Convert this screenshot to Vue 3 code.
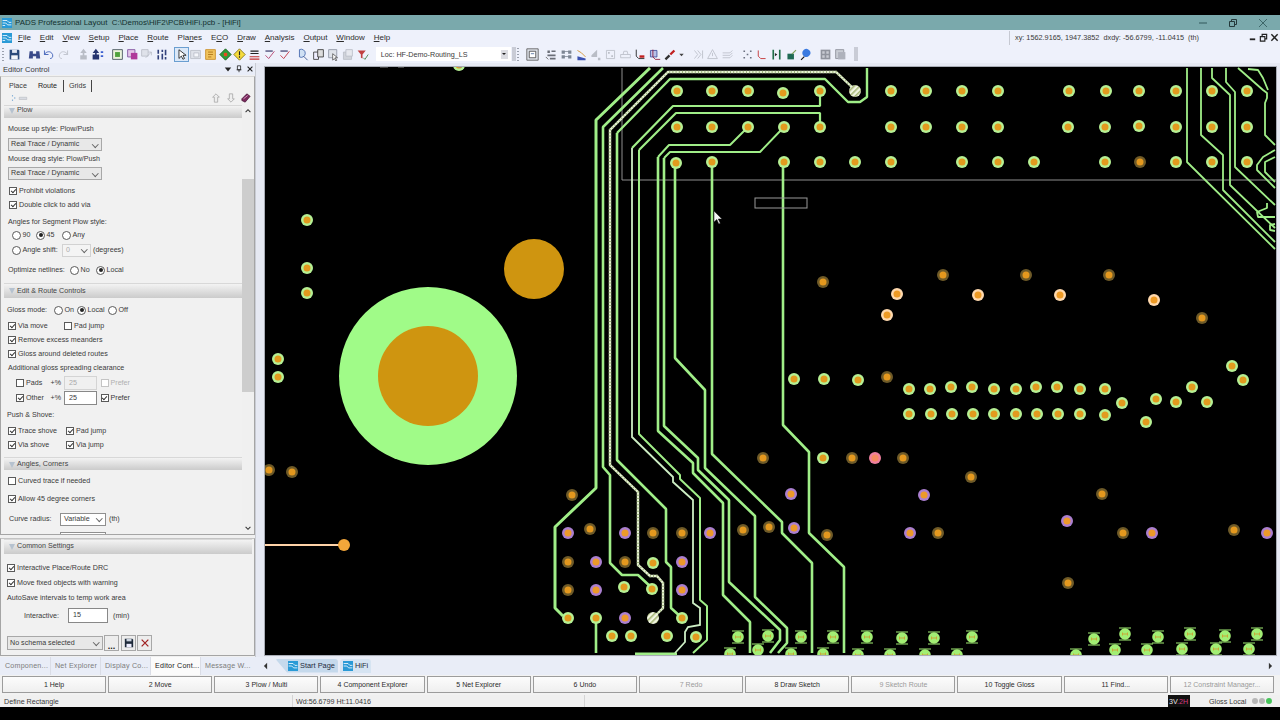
<template>
  <div class="app">
    <div class="letterbox"></div>

    <div class="titlebar">
      <svg class="app-logo" viewBox="0 0 16 16"><rect width="16" height="16" fill="#2a9ad6" /><path d="M1 4h7l3 3h4M1 8h5l3 3h6M1 12h4" stroke="#e8f6ff" stroke-width="1.4" fill="none" /></svg>
      <span class="title-text">PADS Professional Layout&nbsp; C:\Demos\HiF2\PCB\HiFi.pcb - [HiFi]</span>
      <div class="win-controls">
        <svg viewBox="0 0 10 10"><path d="M1 5h8" stroke="#3d6668" stroke-width="1.2" /></svg>
        <svg viewBox="0 0 10 10"><path d="M1.5 3.5h5v5h-5zM3.5 3.5v-2h5v5h-2" stroke="#24393b" fill="none" /></svg>
        <svg viewBox="0 0 10 10"><path d="M1 1l8 8M9 1l-8 8" stroke="#3d6668" stroke-width="1" /></svg>
      </div>
    </div>

    <div class="menubar">
      <svg class="app-logo menu-logo" viewBox="0 0 16 16"><rect width="16" height="16" fill="#2a9ad6" /><path d="M1 4h7l3 3h4M1 8h5l3 3h6M1 12h4" stroke="#e8f6ff" stroke-width="1.4" fill="none" /></svg>
      <nav class="menu-items">
        <span v-for="m in menus" :key="m[0] + m[1]" class="menu-item">{{ m[0] }}<u>{{ m[1] }}</u>{{ m[2] }}</span>
      </nav>
      <div class="coords">xy: 1562.9165, 1947.3852&nbsp; dxdy: -56.6799, -11.0415&nbsp; (th)</div>
      <div class="mdi-controls">
        <svg viewBox="0 0 10 10"><path d="M2 7h6" stroke="#222" stroke-width="2" /></svg>
        <svg viewBox="0 0 10 10"><path d="M1.5 4h5v5h-5zM3.5 4V1.500h5v5H6.500" stroke="#222" fill="none" stroke-width="1.300" /></svg>
        <svg viewBox="0 0 10 10"><path d="M1.500 1.500l7 7M8.500 1.500l-7 7" stroke="#222" stroke-width="1.600" /></svg>
      </div>
    </div>

    <div class="toolbar">
      <span class="grip"></span>
      <div v-for="(group, gi) in leftTools" :key="gi" class="tb-group">
        <span v-for="(ic, i) in group" :key="i" class="tb-slot" :class="{ 'tb-slot--on': ic.on }">
          <svg viewBox="0 0 16 16"><path v-for="(s, k) in ic.parts" :key="k" :d="s.d" :fill="s.f" :stroke="s.s" /></svg>
        </span>
      </div>
      <div class="combo">
        <span>Loc: HF-Demo-Routing_LS</span>
        <i class="combo-arrow"></i>
      </div>
      <span class="tb-end"></span>
      <span class="grip grip--right"></span>
      <div v-for="(group, gi) in rightTools" :key="'r' + gi" class="tb-group">
        <span v-for="(ic, i) in group" :key="i" class="tb-slot" :class="{ 'tb-slot--dd': ic.dd }">
          <svg viewBox="0 0 16 16"><path v-for="(s, k) in ic.parts" :key="k" :d="s.d" :fill="s.f" :stroke="s.s" /></svg>
        </span>
      </div>
      <span class="tb-end"></span>
    </div>

    <div class="main">
      <aside class="editor">
        <div class="editor-title">
          <span>Editor Control</span>
          <div class="editor-title-icons">
            <svg viewBox="0 0 10 10"><path d="M1 3h8L5 8z" fill="#222" /></svg>
            <svg viewBox="0 0 10 10"><path d="M3 1h4v5H3zM2 6h6M5 6v3" stroke="#222" fill="none" /></svg>
            <svg viewBox="0 0 10 10"><path d="M2 2l6 6M8 2l-6 6" stroke="#222" stroke-width="1.400" /></svg>
          </div>
        </div>

        <div class="editor-box">
          <div class="tabs">
            <span class="tab">Place</span>
            <span class="tab tab--active">Route</span>
            <span class="tab tab--line">Grids</span>
          </div>
          <div class="mini-tools">
            <svg class="mini-left" viewBox="0 0 24 10"><path d="M2 1v2M5 4v2M2 7v2" stroke="#8ab4d8" stroke-width="1.500" /><path d="M11 4h10v3H11z" fill="#d8dbe2" stroke="#a8acb4" stroke-width=".6" /></svg>
            <div class="mini-right">
              <svg viewBox="0 0 12 12"><path d="M6 1l4 4H8v6H4V5H2z" fill="#eee" stroke="#aaa" /></svg>
              <svg viewBox="0 0 12 12"><path d="M6 11l4-4H8V1H4v6H2z" fill="#eee" stroke="#aaa" /></svg>
              <svg viewBox="0 0 12 12"><path d="M1 7l6-6 4 3-6 7-4-2z" fill="#7b2a5e" stroke="#3f1230" stroke-width=".8" /><path d="M3 7l5-4" stroke="#e6a8d0" /></svg>
            </div>
          </div>

          <div class="scroll-area">
            <div class="scroll-body">
              <div class="section-head section-head--first">Plow</div>
              <div class="row lbl mt4">Mouse up style: Plow/Push</div>
              <div class="select sel-plow mt2">Real Trace / Dynamic<i class="chev"></i></div>
              <div class="row lbl mt1">Mouse drag style: Plow/Push</div>
              <div class="select sel-plow mt1">Real Trace / Dynamic<i class="chev"></i></div>
              <label class="row cbrow in1 mt4"><i class="cb on"></i>Prohibit violations</label>
              <label class="row cbrow in1"><i class="cb on"></i>Double click to add via</label>
              <div class="row lbl mt3 h13">Angles for Segment Plow style:</div>
              <div class="row in2">
                <i class="rb"></i><span class="w13">90</span>
                <i class="rb on"></i><span class="w15">45</span>
                <i class="rb"></i><span>Any</span>
              </div>
              <div class="row in2 h16">
                <i class="rb"></i><span class="w39">Angle shift:</span>
                <span class="select sel-angle">0<i class="chev"></i></span>
                <span>(degrees)</span>
              </div>
              <div class="row lbl mt4 h16">
                <span class="w62">Optimize netlines:</span>
                <i class="rb"></i><span class="w15">No</span>
                <i class="rb on"></i><span>Local</span>
              </div>
              <div class="section-head h15 mt5">Edit &amp; Route Controls</div>
              <div class="row h16 mt4 in3">
                <span class="w47">Gloss mode:</span>
                <i class="rb"></i><span class="w12">On</span>
                <i class="rb on"></i><span class="w20">Local</span>
                <i class="rb"></i><span>Off</span>
              </div>
              <div class="row cbrow in4 mt1">
                <i class="cb on"></i><span class="w46">Via move</span>
                <i class="cb"></i><span>Pad jump</span>
              </div>
              <label class="row cbrow in4"><i class="cb on"></i>Remove excess meanders</label>
              <label class="row cbrow in4"><i class="cb on"></i>Gloss around deleted routes</label>
              <div class="row lbl">Additional gloss spreading clearance</div>
              <div class="row cbrow in5 mt1">
                <i class="cb"></i><span class="w24">Pads</span><span class="w14">+%</span>
                <span class="num num--off">25</span>
                <i class="cb cb--off"></i><span class="dim">Prefer</span>
              </div>
              <div class="row cbrow in5 h16">
                <i class="cb on"></i><span class="w24">Other</span><span class="w14">+%</span>
                <span class="num">25</span>
                <i class="cb on"></i><span>Prefer</span>
              </div>
              <div class="row mt2 in3">Push &amp; Shove:</div>
              <div class="row cbrow in4 mt2">
                <i class="cb on"></i><span class="w48">Trace shove</span>
                <i class="cb on"></i><span>Pad jump</span>
              </div>
              <div class="row cbrow in4">
                <i class="cb on"></i><span class="w48">Via shove</span>
                <i class="cb on"></i><span>Via jump</span>
              </div>
              <div class="section-head mt5">Angles, Corners</div>
              <label class="row cbrow in4 mt4"><i class="cb"></i>Curved trace if needed</label>
              <label class="row cbrow in4 mt4"><i class="cb on"></i>Allow 45 degree corners</label>
              <div class="row mt6 in6">
                <span class="w51">Curve radius:</span>
                <span class="select sel-curve">Variable<i class="chev"></i></span>
                <span>(th)</span>
              </div>
              <div class="select sel-curve sel-clip"></div>
            </div>
            <div class="scrollbar">
              <svg class="arrow" viewBox="0 0 10 6"><path d="M2 5l3-3 3 3" stroke="#333" fill="none" stroke-width="1.300" /></svg>
              <div class="thumb"></div>
              <svg class="arrow arrow--down" viewBox="0 0 10 6"><path d="M2 1l3 3 3-3" stroke="#333" fill="none" stroke-width="1.300" /></svg>
            </div>
          </div>
        </div>

        <div class="common-box">
          <div class="section-head common-head">Common Settings</div>
          <label class="row cbrow in7 mt7"><i class="cb on"></i>Interactive Place/Route DRC</label>
          <label class="row cbrow in7 mt1"><i class="cb on"></i>Move fixed objects with warning</label>
          <div class="row in8 mt1">AutoSave intervals to temp work area</div>
          <div class="row interactive">
            <span class="w44">Interactive:</span>
            <span class="num num--wide">15</span>
            <span>(min)</span>
          </div>
          <div class="schema-row">
            <div class="select sel-schema">No schema selected<i class="chev"></i></div>
            <span class="sq-btn sq-btn--dots">...</span>
            <span class="sq-btn">
              <svg viewBox="0 0 12 12"><path d="M1 1h9l1 1v9H1z" fill="#1e2a3a" /><path d="M3 1h6v3H3z" fill="#cdd5e0" /><path d="M3 7h6v4H3z" fill="#eef" /></svg>
            </span>
            <span class="sq-btn">
              <svg viewBox="0 0 12 12"><path d="M2 2l8 8M10 2l-8 8" stroke="#a02020" stroke-width="1.500" /></svg>
            </span>
          </div>
        </div>
      </aside>

      <div class="canvas-wrap">
        <svg class="board" viewBox="265 67 1011 588" preserveAspectRatio="none">
          <defs>
            <pattern id="hatch" width="4" height="4" patternUnits="userSpaceOnUse" patternTransform="rotate(45)">
              <rect width="4" height="4" fill="#f2f6e2" />
              <rect width="1.600" height="4" fill="#a8b878" />
            </pattern>
          </defs>

          <circle cx="428" cy="376" r="89" fill="#a0fb88" />
          <circle cx="428" cy="376" r="50" fill="#cf9510" />
          <circle cx="534" cy="269" r="30" fill="#cf9510" />

          <path d="M265 545H343" stroke="#ffd3a8" stroke-width="2" fill="none" />
          <circle cx="344" cy="545" r="6" fill="#f2a63a" />

          <path d="M622 68V180H1276" stroke="#8e8e8e" fill="none" />

          <path v-for="(t, i) in traces" :key="'t' + i" :d="t[0]" :stroke-width="t[1]" stroke="#a0ee88" fill="none" stroke-linejoin="bevel" />
          <path v-for="(t, i) in paleTraces" :key="'p' + i" :d="t" stroke-width="1.800" stroke="#cdeec4" fill="none" />
          <template v-for="(t, i) in hatchTraces" :key="'h' + i">
            <path :d="t" stroke-width="2.400" stroke="#e6f2d2" fill="none" />
            <path :d="t" stroke-width="2.400" stroke="#9db37c" stroke-dasharray="1 2.200" fill="none" />
          </template>

          <rect x="755" y="198" width="52" height="10" fill="none" stroke="#9a9a9a" />

          <g v-for="group in padGroups" :key="group.name">
            <g v-for="(p, i) in group.pts" :key="i">
              <circle :cx="p[0]" :cy="p[1]" r="6" :fill="group.ring" />
              <circle :cx="p[0]" :cy="p[1]" r="3.500" :fill="group.core" />
            </g>
          </g>

          <circle v-for="(p, i) in hatchPads" :key="'hp' + i" :cx="p[0]" :cy="p[1]" r="6" fill="url(#hatch)" />

          <g v-for="(p, i) in smdPads" :key="'s' + i" :transform="`translate(${p[0]} ${p[1]})`">
            <circle r="5.800" fill="#a2ee74" />
            <path d="M-6-6.500H6V-5.500H-6zM-6 5.500H6V6.500H-6z" fill="#a2ee74" />
            <path d="M-2.500-1.500v3M2.500-1.500v3M-2.500 0h5" stroke="#c8a838" fill="none" />
          </g>

          <path d="M714 211v11l2.800-2.500 2 4.500 1.500-.7-2-4.300h3.700z" fill="#f4f4f4" stroke="#111" stroke-width=".5" />
          <path d="M380 67h8M398 67h6M458 67h4" stroke="#888" stroke-width="1" />
        </svg>
      </div>
    </div>

    <div class="tabrow">
      <div class="panel-tabs">
        <span v-for="t in panelTabs" :key="t" class="panel-tab" :class="{ 'panel-tab--on': t === 'Editor Cont...' }">{{ t }}</span>
      </div>
      <div class="doc-tabs">
        <svg class="nav-arrow" viewBox="0 0 6 10"><path d="M5 1L1 5l4 4z" fill="#333" /></svg>
        <span class="doc-tab doc-tab--start">
          <svg class="doc-ico" viewBox="0 0 16 16"><rect width="16" height="16" fill="#2a9ad6" /><path d="M1 4h7l3 3h4M1 8h5l3 3h6" stroke="#e8f6ff" stroke-width="1.400" fill="none" /></svg>
          Start Page
        </span>
        <span class="doc-tab doc-tab--hifi">
          <svg class="doc-ico" viewBox="0 0 16 16"><rect width="16" height="16" fill="#2a9ad6" /><path d="M1 4h7l3 3h4M1 8h5l3 3h6" stroke="#e8f6ff" stroke-width="1.400" fill="none" /></svg>
          HiFi
        </span>
        <svg class="nav-arrow nav-arrow--end" viewBox="0 0 6 10"><path d="M1 1l4 4-4 4z" fill="#333" /></svg>
      </div>
    </div>

    <div class="fkeys">
      <button v-for="k in fkeys" :key="k.label" class="fkey" :class="{ 'fkey--off': k.off }">{{ k.label }}</button>
    </div>

    <div class="statusbar">
      <span class="st-cell st-msg">Define Rectangle</span>
      <span class="st-cell st-size">Wd:56.6799 Ht:11.0416</span>
      <span class="st-cell st-blank"></span>
      <span class="st-layer">3V<b>.2H</b></span>
      <span class="st-gloss">Gloss Local</span>
      <span class="st-dot"></span><span class="st-dot"></span><span class="st-dot st-dot--on"></span>
    </div>
  </div>
</template>

<script setup>
const menus = [
  ['', 'F', 'ile'], ['', 'E', 'dit'], ['', 'V', 'iew'], ['', 'S', 'etup'], ['', 'P', 'lace'], ['', 'R', 'oute'],
  ['Pla', 'n', 'es'], ['E', 'C', 'O'], ['', 'D', 'raw'], ['', 'A', 'nalysis'], ['', 'O', 'utput'], ['', 'W', 'indow'], ['', 'H', 'elp']
]

const panelTabs = ['Componen...', 'Net Explorer', 'Display Co...', 'Editor Cont...', 'Message W...']

const fkeys = [
  { label: '1 Help' }, { label: '2 Move' }, { label: '3 Plow / Multi' }, { label: '4 Component Explorer' },
  { label: '5 Net Explorer' }, { label: '6 Undo' }, { label: '7 Redo', off: true }, { label: '8 Draw Sketch' },
  { label: '9 Sketch Route', off: true }, { label: '10 Toggle Gloss' }, { label: '11 Find...' },
  { label: '12 Constraint Manager...', off: true }
]

// f = fill, d = path, s = stroke
const p = (f, d, s = 'none') => ({ f, d, s })
const ico = (...parts) => ({ parts })
const grey = '#b9bdc6'

const leftTools = [
  [ico(p('#2b4a7a', 'M2 2h11l1 1v11H2z'), p('#dfe6f2', 'M5 2h6v4H5z'), p('#f4f6fa', 'M4 9h8v5H4z'))],
  [
    ico(p('#3a4a8a', 'M2 4h4v9H1zM10 4h4l1 9h-5zM6 7h4v3H6z')),
    ico(p('none', 'M3 3v5h5M3 8c2-4 8-5 10 0 1 3-1 5-3 5', '#2a4fb0')),
    ico(p('none', 'M13 3v5H8M13 8C11 4 5 3 3 8c-1 3 1 5 3 5', grey))
  ],
  [
    ico(p(grey, 'M8 1l4 5H9v3h3v5H4V9h3V6H4z')),
    ico(p('#25346f', 'M6 1l4 5H7v2h3v6H2V8h3V6H2z'), p('#3a5fd0', 'M12 4h3v2h-3zM12 9h3v2h-3z'))
  ],
  [
    ico(p('#eaf3dc', 'M2 2h12v12H2z', '#3a4a52'), p('#4fa23c', 'M5 5h6v6H5z')),
    ico(p('#e4c7e8', 'M2 2h9v9H2z', '#7a4a9a'), p('#b03a9a', 'M6 6h8v8H6z')),
    ico(p('#dfe2ea', 'M2 2h8v8H2z', grey), p('none', 'M7 12L14 5M10 5h4v4', grey)),
    ico(p('#31407a', 'M3 2h2v5H3zM3 9h2v5H3zM8 2h2v3H8zM8 7h2v7H8zM12 2h2v7h-2zM12 11h2v3h-2z'))
  ],
  [
    { on: true, parts: [p('#fff', 'M5 2v11l3-3 2 4 2-1-2-4h4z', '#111')] },
    ico(p('#dfe3ea', 'M2 3h12v10H2z', grey), p('#f5f7fb', 'M6 6h6v5H6z', grey)),
    ico(p('#f1c35c', 'M2 2h12v12H2z', '#c88a20'), p('#fff3cf', 'M5 5h6M5 8h6M5 11h4', '#a86e10')),
    ico(p('#2f9e38', 'M8 1l7 7-7 7-7-7z', '#1b5a20'), p('#e84a20', 'M6 6h4v4H6z')),
    ico(p('#f6dc3c', 'M8 1l7 7-7 7-7-7z', '#7a6a10'), p('#222', 'M7.300 4h1.400v5H7.300zM7.300 10h1.400v2H7.300z')),
    ico(p('#c03030', 'M2 10h12v1.500H2zM2 13h12v1.500H2z'), p('#222', 'M3 3h10v1.500H3zM3 6h10v1.500H3z')),
    ico(p('none', 'M3 9l4 4 7-9', '#b03060'), p('#3a3a6a', 'M3 3h9v1.500H3z')),
    ico(p('none', 'M3 9l4 4 7-9', '#c02030'), p('#3a3a6a', 'M3 3h9v1.500H3z'))
  ],
  [
    ico(p('#cfe0f4', 'M3 2a5 5 0 1 1 0 9z', '#3a5fa8'), p('none', 'M8 10l5 5', '#2a4a88')),
    ico(p('#eef', 'M2 5h6v9H2z', '#333'), p('#ddd', 'M7 2h7v9H7z', '#333')),
    ico(p('#dfe3ea', 'M2 2h10v10H2z', '#8a90a0'), p('#fff', 'M7 7v8l2-2 2 3 1-1-2-3h3z', '#555')),
    ico(p('#d0d3da', 'M3 5h10v9H3z', grey), p('#e6e8ee', 'M6 2h8v8H6z', grey)),
    ico(p('#c04040', 'M2 3h10L8 8v5l-2-1V8z'), p('none', 'M9 12l2 2 4-6', '#3a7a3a'))
  ]
]

const rightTools = [
  [ico(p('#dfe3ea', 'M1 1h14v14H1z', '#555'), p('#fff', 'M4 4h8v8H4z', '#444'), p('none', 'M6 7h4', '#4a6a9a'))],
  [
    ico(p('#6a6e78', 'M3 3h3v3H3zM8 3h5v2H8zM3 8h10v2H3zM6 12h7v2H6z'), p('none', 'M1 11l3 3', '#555')),
    ico(p('#7d8694', 'M2 3h4v4H2zM10 3h4v4h-4zM2 9h4v4H2zM10 9h4v4h-4zM6 4h4v1H6zM6 10h4v1H6z')),
    ico(p('#3a50b0', 'M3 10l10 3v2H3z'), p('none', 'M3 3l5 3 5 5', '#d08a20')),
    ico(p(grey, 'M3 9l7-7v9H3zM11 12h3v3h-3z')),
    ico(p('none', 'M3 3h10v10H3z', grey), p(grey, 'M5 5h2v2H5zM9 9h2v2H9z')),
    ico(p('none', 'M2 8h12v4H2zM5 8l1-4h4l1 4', grey)),
    ico(p('none', 'M4 2v8l3 3h7', '#111'), p('#c02020', 'M8 9h6v3H8z')),
    ico(p('#b8c0e8', 'M3 3h8v8H3z', '#3a4a9a'), p('none', 'M6 2v9l3 3h6', '#8a1030')),
    ico(p('#333', 'M2 13l5-5 2 2-5 5z'), p('#c02020', 'M8 7l5-5 2 2-5 5z')),
    { dd: true, parts: [p('#444', 'M3 6h10l-5 6z')] }
  ],
  [
    ico(p('none', 'M3 3l4 5-4 5M7 3l4 5-4 5', grey), p('none', 'M13 3v10', grey)),
    ico(p('none', 'M8 2L2 13h12z', grey), p('none', 'M8 6v4', grey)),
    ico(p('none', 'M2 6h9l3-3M2 9h9l3-3M2 12h9l3-3', grey))
  ],
  [
    ico(p('#6a7080', 'M3 3h2v2H3zM11 3h2v2h-2zM7 7h2v2H7zM3 11h2v2H3zM11 11h2v2h-2z')),
    ico(p('none', 'M4 3v7l3 3h6', '#c02020')),
    ico(p('#1f6f4a', 'M3 2h2v12H3zM11 2h2v12h-2z'), p('#222', 'M6 6l3 2-3 2z')),
    ico(p('#1f6a54', 'M3 7h8v7H3z'), p('#7fa05a', 'M8 7l5-5 1 1-5 5z')),
    ico(p('#3a7ae0', 'M6 2a5 5 0 1 1 0 8 5 5 0 0 1 0-8z'), p('#111', 'M2 14l4-4 1 1-4 4z'))
  ],
  [
    ico(p('#90949e', 'M2 2h12v12H2z'), p('#c7cad2', 'M4 4h3v3H4zM9 4h3v3H9zM4 9h3v3H4zM9 9h3v3H9z')),
    ico(p('#c8ccd4', 'M2 2h10v11H2z', '#8a8e98'), p('#aeb2bc', 'M5 5h9v9H5z'))
  ]
]

const traces = [
  ['M650 68L596 120V488L555 527V608L563 616', 3],
  ['M663 68L603 127V467L610 475V563L622 575H638L652 588', 2.6],
  ['M617 133L670 79H825L848 102H860L867 97V68', 2.4],
  ['M617 133V460L666 509V562L671 567V608L682 618', 2.6],
  ['M632 148L673 106H820V91', 2.2],
  ['M639 150L676 113H820V126', 2.2],
  ['M639 150V434L680 475V479L700 498V600L707 606V640L693 653', 2],
  ['M658 157L669 145H730L748 127', 2],
  ['M658 157V431L693 463V473L723 503V595L750 622V653', 2.6],
  ['M664 158L670 152H760L784 127', 2],
  ['M664 158V426L698 458V470L729 500V582L780 630V640L770 653', 2.6],
  ['M675 163V358L705 390V468L755 516V597L787 628V643L778 653', 2.6],
  ['M712 162V454L782 522V533L812 563V653', 2.6],
  ['M783 162V425L809 452V533L844 567V653', 2.6],
  ['M596 618V653', 2.6],
  ['M635 654H677', 3],
  ['M1187 68V162L1275 249', 1.800],
  ['M1201 68V135L1223 155V190L1275 242', 1.800],
  ['M1212 68V78L1230 95V185L1275 228', 1.800],
  ['M1226 68V82L1235 92V167L1275 205', 1.800],
  ['M1238 68L1263 90L1267 93V98L1265 103V135L1275 145', 1.800],
  ['M1248 69L1258 70L1263 78L1268 90', 1.800],
  ['M1275 150L1263 157L1257 165V170L1275 188', 1.800],
  ['M1275 157L1265 162V172L1275 182', 1.800],
  ['M1275 217H1258L1257 212L1267 208V203', 1.800],
  ['M1275 224L1270 225V230L1275 231', 1.800]
]

const paleTraces = ['M632 148V437L673 477V482L693 500V603L700 608V625L688 627L685 632V642L675 653']

const hatchTraces = [
  'M855 90L836 72H668L610 130V465L638 492V565L650 576H657L663 583V608L653 618'
]

const padGroups = [
  {
    name: 'green', ring: '#b6f094', core: '#e29a1e',
    pts: [
      [677, 91], [712, 91], [748, 91], [783, 93], [820, 91], [891, 91], [926, 91], [962, 91], [998, 91], [1069, 91], [1106, 91], [1139, 91], [1176, 91], [1212, 91], [1247, 91],
      [677, 127], [712, 127], [748, 127], [784, 127], [820, 127], [891, 127], [926, 127], [962, 127], [998, 127], [1068, 127], [1105, 127], [1139, 126], [1176, 127], [1212, 127], [1247, 127],
      [676, 163], [712, 162], [784, 162], [820, 162], [855, 162], [891, 162], [962, 162], [998, 162], [1034, 162], [1105, 162], [1176, 162], [1212, 162], [1247, 162],
      [459, 65], [307, 220], [307, 268], [307, 293], [278, 359], [278, 377],
      [794, 379], [824, 379], [858, 380], [823, 458],
      [909, 389], [930, 389], [951, 387], [972, 387], [994, 389], [1016, 389], [1036, 387], [1057, 387], [1080, 389], [1105, 389],
      [909, 414], [931, 414], [952, 414], [973, 414], [994, 414], [1016, 414], [1037, 414], [1058, 414], [1080, 414], [1105, 415],
      [1122, 403], [1156, 399], [1176, 402], [1192, 387], [1207, 402], [1146, 422], [1232, 366], [1243, 380],
      [653, 563], [624, 587], [652, 589], [568, 618], [596, 618], [682, 618], [612, 636], [631, 636], [667, 636], [696, 637]
    ]
  },
  {
    name: 'brown', ring: '#6e5a28', core: '#e4981e',
    pts: [
      [1140, 162], [823, 282], [943, 275], [1026, 275], [1109, 275], [1202, 318], [887, 377], [763, 458], [852, 458], [903, 458], [971, 477], [1102, 494],
      [938, 533], [1123, 533], [1234, 530], [1068, 583], [269, 470], [292, 472], [572, 495], [590, 529], [653, 533], [682, 533], [743, 530], [769, 527],
      [827, 535], [568, 562], [625, 562], [568, 590]
    ]
  },
  {
    name: 'light', ring: '#ffd9ae', core: '#ee9a24',
    pts: [[897, 294], [978, 295], [1060, 295], [1154, 300], [887, 315]]
  },
  {
    name: 'pink', ring: '#ee7f9e', core: '#f58a60',
    pts: [[875, 458]]
  },
  {
    name: 'purple', ring: '#ab7fd0', core: '#ec9a2a',
    pts: [
      [791, 494], [924, 495], [910, 533], [1067, 521], [1152, 533], [1267, 533], [568, 533], [625, 533], [710, 533], [794, 528],
      [596, 562], [682, 562], [596, 590], [682, 590], [625, 618]
    ]
  }
]

const hatchPads = [[855, 91], [653, 618]]

const smdPads = [
  [738, 637], [768, 636], [801, 637], [833, 637], [730, 654], [758, 650], [791, 654], [823, 654],
  [867, 637], [902, 638], [934, 638], [972, 637], [1094, 639], [1125, 634], [1158, 637], [1190, 634], [1225, 636], [1257, 634],
  [858, 655], [890, 655], [925, 655], [957, 655], [1076, 655], [1115, 650], [1147, 650], [1182, 649], [1216, 649], [1249, 649]
]
</script>

<style>
html, body { margin: 0; background: #000; }
</style>

<style scoped>
.app {
  width: 1280px;
  height: 720px;
  overflow: hidden;
  background: #000;
  display: flex;
  flex-direction: column;
  font-family: "Liberation Sans", Arial, sans-serif;
  font-size: 7.150px;
  color: #3a3a3a;
}
.letterbox { height: 15px; flex: none; }

.titlebar {
  height: 15px;
  flex: none;
  background: #7aa9ac;
  display: flex;
  align-items: center;
  padding-left: 2px;
}
.app-logo { width: 10px; height: 10px; flex: none; }
.title-text { margin-left: 3px; color: #14302f; font-size: 7.900px; }
.win-controls { margin-left: auto; display: flex; gap: 20px; padding-right: 12px; }
.win-controls svg { width: 10px; height: 10px; }

.menubar {
  height: 15px;
  flex: none;
  background: #eef1fb;
  display: flex;
  align-items: center;
  padding-left: 2px;
}
.menu-items { display: flex; margin-left: 6px; gap: 8.900px; flex: none; }
.menu-item { font-size: 8px; color: #2c2c2c; }
.coords {
  margin-left: auto;
  border-left: 1px solid #c6c9d2;
  padding: 2px 0 0 5px;
  height: 14px;
  box-sizing: border-box;
  width: 239px;
  font-size: 7.300px;
}
.mdi-controls { display: flex; gap: 2px; padding-right: 1px; }
.mdi-controls svg { width: 9px; height: 9px; }

.toolbar {
  height: 18px;
  flex: none;
  background: #eef1fb;
  display: flex;
  align-items: center;
  padding-left: 2px;
}
.grip { width: 2px; height: 13px; margin-right: 3px; background: repeating-linear-gradient(#9aa0ad 0 1px, transparent 1px 3px); flex: none; }
.grip--right { margin-left: -1px; margin-right: 6px; }
.tb-group { display: flex; margin-right: 5px; flex: none; }
.tb-slot { width: 14.700px; height: 15px; display: flex; align-items: center; justify-content: center; box-sizing: border-box; }
.tb-slot svg { width: 13px; height: 13px; }
.tb-slot--on { background: #dbe8f8; border: 1px solid #6a9ed0; }
.tb-slot--dd { width: 9px; }
.tb-slot--dd svg { width: 7px; height: 7px; }
.combo {
  width: 135px;
  height: 14px;
  box-sizing: border-box;
  background: #fff;
  display: flex;
  align-items: center;
  padding-left: 5px;
  margin-left: 1px;
  font-size: 7.200px;
  flex: none;
}
.combo-arrow { margin-left: auto; margin-right: 3px; width: 7px; height: 9px; background: #dcdde2; position: relative; }
.combo-arrow::after {
  content: "";
  position: absolute;
  left: 1.500px;
  top: 3.500px;
  border: 2px solid transparent;
  border-top-color: #222;
}
.tb-end { width: 4px; height: 14px; background: #c9ccd6; margin-right: 2px; margin-left: 1px; flex: none; }

.main {
  height: 594px;
  flex: none;
  background: #e6e9f3;
  display: flex;
}
.editor {
  width: 256px;
  flex: none;
  display: flex;
  flex-direction: column;
  background: #f0f0f0;
  border-right: 1px solid #c9ccd4;
  box-sizing: border-box;
}
.editor-title {
  height: 12px;
  padding: 0 1px 0 3px;
  display: flex;
  align-items: center;
  justify-content: space-between;
  background: #e9edf8;
  font-size: 7.600px;
}
.editor-title-icons { display: flex; gap: 3px; }
.editor-title-icons svg { width: 8px; height: 8px; }

.editor-box {
  height: 459px;
  margin: 1px 0 0 0;
  box-sizing: border-box;
  border: 1px solid #a5a5a5;
  border-top-color: #d6d6d6;
  background: #f1f1f1;
  display: flex;
  flex-direction: column;
}
.tabs { height: 15px; padding: 2px 0 0 4px; box-sizing: border-box; display: flex; align-items: center; flex: none; }
.tab { padding: 0 5px 0 4px; }
.tab--active { border-right: 1px solid #444; color: #222; height: 12px; line-height: 12px; padding: 0 6px; }
.tab--line { border-right: 1px solid #444; height: 12px; line-height: 12px; padding: 0 5px; }
.mini-tools { height: 12px; display: flex; align-items: center; justify-content: space-between; padding: 0 3px 0 10px; flex: none; }
.mini-left { width: 18px; height: 8px; }
.mini-right { display: flex; gap: 5px; }
.mini-right svg { width: 10px; height: 10px; }

.scroll-area { flex: 1; display: flex; min-height: 0; }
.scroll-body { width: 238px; margin-left: 3px; padding-top: 1px; box-sizing: border-box; flex: none; overflow: hidden; }
.scrollbar { width: 12px; margin-left: auto; position: relative; background: #f0f0f0; display: flex; flex-direction: column; }
.thumb { position: absolute; left: 0; right: 0; top: 75px; height: 213px; background: #cdcdcd; }
.arrow { width: 8px; height: 5px; margin: 4px auto 0; }
.arrow--down { margin: auto auto 3px; }

.section-head {
  height: 13px;
  line-height: 13px;
  background: linear-gradient(#f3f3f3, #cbcbcb);
  border-top: 1px solid #d8d8d8;
  box-sizing: border-box;
  padding-left: 13px;
  position: relative;
  color: #444;
}
.section-head::before {
  content: "";
  position: absolute;
  left: 5px;
  top: 3.500px;
  border: 3px solid transparent;
  border-top: 6px solid #b6c2cf;
  border-bottom: 0;
}
.section-head--first { line-height: 9px; overflow: hidden; }
.section-head--first::before { top: 1.500px; }
.common-head { margin: 0 0 0 3px; width: 248px; height: 15px; line-height: 13px; }

.row { height: 14px; display: flex; align-items: center; white-space: nowrap; }
.lbl { padding-left: 4px; }
.h13 { height: 13px; }
.h15 { height: 15px; line-height: 15px; }
.h16 { height: 16px; }
.mt1 { margin-top: 1px; }
.mt2 { margin-top: 2px; }
.mt3 { margin-top: 3px; }
.mt4 { margin-top: 4px; }
.mt5 { margin-top: 5px; }
.mt6 { margin-top: 6px; }
.mt7 { margin-top: 7px; }
.in1 { padding-left: 5px; }
.in2 { padding-left: 8px; }
.in3 { padding-left: 3px; }
.in4 { padding-left: 4px; }
.in5 { padding-left: 12px; }
.in6 { padding-left: 5px; }
.in7 { padding-left: 6px; }
.in8 { padding-left: 6px; }
.w12 { width: 12.500px; }
.w13 { width: 13.500px; }
.w14 { width: 13.500px; }
.w15 { width: 15.500px; }
.w20 { width: 20.500px; }
.w24 { width: 24.500px; }
.w39 { width: 39.500px; }
.w44 { width: 44px; }
.w46 { width: 46px; }
.w47 { width: 47px; }
.w48 { width: 48px; }
.w51 { width: 51px; }
.w62 { width: 62px; }
.dim { color: #b0b0b0; }

.cb {
  width: 8px;
  height: 8px;
  box-sizing: border-box;
  border: 1px solid #5a5a5a;
  background: #fff;
  margin-right: 2px;
  flex: none;
  position: relative;
}
.cb--off { border-color: #c4c4c4; }
.cb.on::after {
  content: "";
  position: absolute;
  left: 1.500px;
  top: 0;
  width: 2px;
  height: 4px;
  border: solid #333;
  border-width: 0 1px 1px 0;
  transform: rotate(42deg);
}
.rb {
  width: 9px;
  height: 9px;
  box-sizing: border-box;
  border: 1px solid #5a5a5a;
  border-radius: 50%;
  background: #fff;
  margin-right: 1.500px;
  flex: none;
  position: relative;
}
.rb.on::after {
  content: "";
  position: absolute;
  inset: 1.500px;
  border-radius: 50%;
  background: #222;
}

.select {
  box-sizing: border-box;
  height: 13px;
  line-height: 11px;
  background: #e8e8e8;
  border: 1px solid #a8a8a8;
  padding-left: 2px;
  position: relative;
}
.sel-plow { width: 94px; margin-left: 4px; }
.sel-angle { width: 29px; margin: 0 2px 0 0; background: #f4f4f4; color: #aaa; padding-left: 3px; border-color: #d2d2d2; flex: none; }
.sel-curve { width: 46px; background: #fff; border-color: #8f8f8f; margin-right: 3px; padding-left: 3px; flex: none; }
.sel-clip { margin: 6px 0 0 56px; height: 6px; }
.sel-schema { width: 96px; height: 14px; line-height: 12px; flex: none; }
.chev {
  position: absolute;
  right: 4px;
  top: 2.500px;
  width: 3.500px;
  height: 3.500px;
  border: solid #666;
  border-width: 0 1px 1px 0;
  transform: rotate(45deg);
}
.num {
  width: 33px;
  height: 14px;
  line-height: 12px;
  box-sizing: border-box;
  border: 1px solid #888;
  background: #fff;
  padding-left: 4px;
  margin-right: 3.500px;
  flex: none;
}
.num--off { border-color: #d4d4d4; background: #f0f0f0; color: #aaa; }
.num--wide { width: 40px; height: 15px; line-height: 13px; margin-right: 5px; }

.common-box {
  height: 118px;
  margin-top: 3px;
  box-sizing: border-box;
  border: 1px solid #a5a5a5;
  border-top-color: #c4c4c4;
  background: #f1f1f1;
}
.interactive { padding-left: 23px; height: 15px; margin-top: 3px; }
.schema-row { display: flex; align-items: center; gap: 1px; margin: 12px 0 0 6px; }
.sq-btn {
  width: 15px;
  height: 16px;
  box-sizing: border-box;
  border: 1px solid #a8a8a8;
  background: #ededed;
  display: flex;
  align-items: center;
  justify-content: center;
  flex: none;
}
.sq-btn svg { width: 10px; height: 10px; }
.sq-btn--dots { font-weight: 700; color: #222; align-items: flex-end; line-height: 8px; font-size: 9px; margin-right: 1px; }

.canvas-wrap {
  width: 1013px;
  height: 590px;
  margin: 3px 0 1px 8px;
  border: 1px solid #a9adb6;
  background: #000;
  box-sizing: border-box;
  flex: none;
}
.board { width: 100%; height: 100%; display: block; background: #000; }

.tabrow { height: 18px; flex: none; background: #e9edf7; display: flex; }
.panel-tabs { display: flex; width: 256px; flex: none; padding-left: 1px; box-sizing: border-box; align-items: stretch; }
.panel-tab {
  width: 50px;
  box-sizing: border-box;
  padding-left: 4px;
  line-height: 18px;
  color: #7c7c7c;
  letter-spacing: .2px;
  white-space: nowrap;
  border-right: 1px solid #dadde6;
  flex: none;
}
.panel-tab--on { background: #fbfbfb; color: #222; }
.panel-tab:last-child { border: 0; }
.doc-tabs { flex: 1; display: flex; align-items: center; padding-left: 7px; }
.nav-arrow { width: 5px; height: 8px; margin-right: 7px; }
.nav-arrow--end { margin: 0 7px 0 auto; }
.doc-tab {
  height: 14px;
  display: flex;
  align-items: center;
  gap: 2px;
  padding: 0 3px;
  color: #1f2c3c;
  font-size: 7.400px;
  margin-right: 2px;
  border-radius: 3px 3px 0 0;
  margin-top: -1px;
}
.doc-tab--start { background: #c5d9ec; padding-left: 13px; clip-path: polygon(0 0, 100% 0, 100% 100%, 12px 100%); }
.doc-tab--hifi { background: #d6e4f2; }
.doc-ico { width: 10px; height: 10px; }

.fkeys {
  height: 20px;
  flex: none;
  background: #f2f2f2;
  display: grid;
  grid-template-columns: repeat(12, 1fr);
  gap: 2px;
  padding: 1px 6px 2px 2px;
  box-sizing: border-box;
}
.fkey {
  font: inherit;
  font-size: 7px;
  color: #2b2b2b;
  background: linear-gradient(#fcfcfc, #efefef);
  border: 1px solid #9c9c9c;
  padding: 0;
  white-space: nowrap;
  overflow: hidden;
  min-width: 0;
}
.fkey--off { color: #9a9a9a; }

.statusbar {
  height: 12px;
  flex: none;
  background: #f0f0f0;
  display: flex;
  align-items: flex-start;
  overflow: hidden;
  line-height: 14px;
}
.st-cell { height: 12px; box-sizing: border-box; flex: none; }
.st-msg { width: 292px; padding-left: 4px; }
.st-size { width: 292px; padding-left: 3px; border-left: 1px solid #d4d4d4; }
.st-blank { width: 291px; border-left: 1px solid #d4d4d4; }
.st-layer { margin-left: 293px; width: 22px; background: #111; color: #e6e6e6; height: 12px; flex: none; padding-left: 1px; box-sizing: border-box; }
.st-layer b { color: #d83a80; font-weight: 400; }
.st-gloss { margin-left: 19px; margin-right: 6px; flex: none; }
.st-dot { width: 6px; height: 6px; border-radius: 50%; background: #b7b7b7; margin: 3px 1px 0 0; flex: none; }
.st-dot--on { background: #46c45a; }
</style>
